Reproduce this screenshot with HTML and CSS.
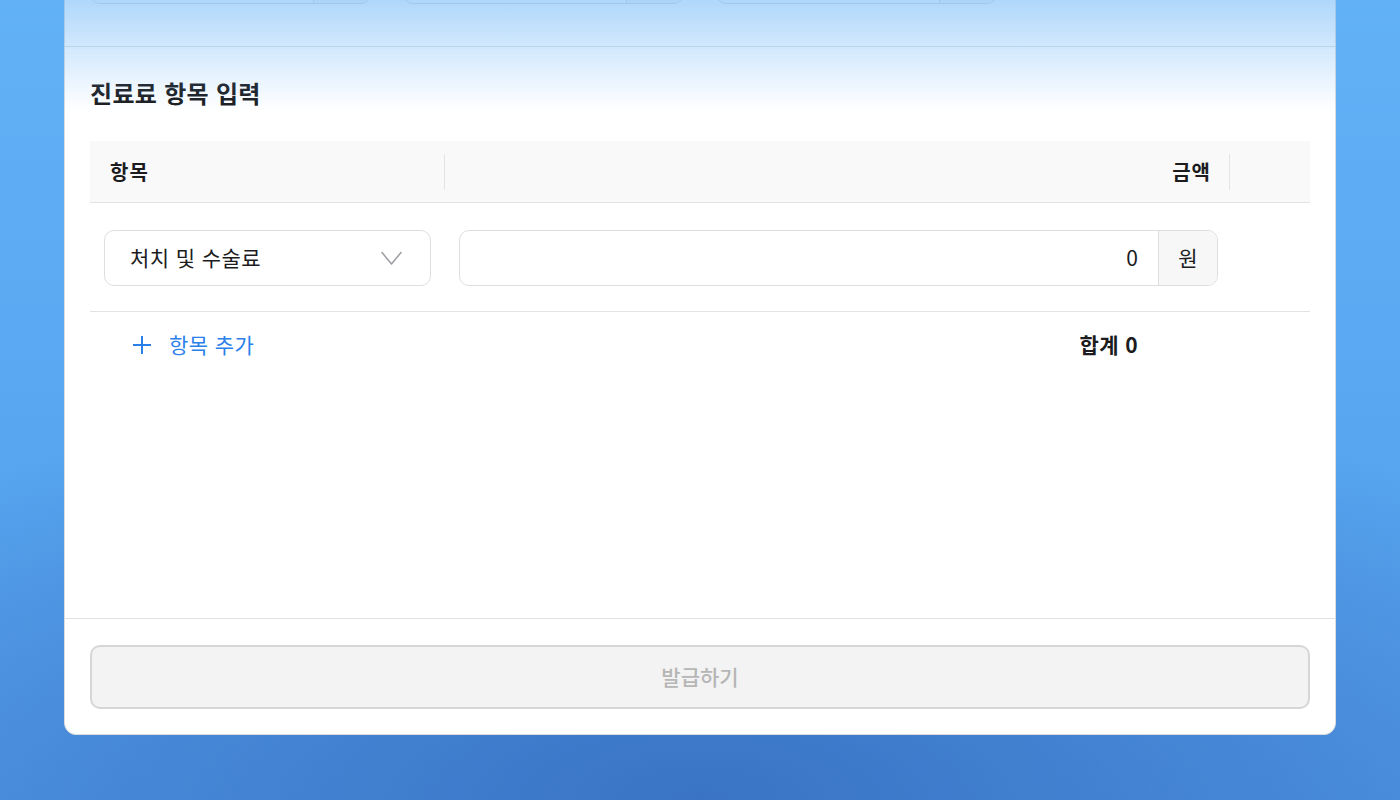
FILE: index.html
```html
<!DOCTYPE html>
<html lang="ko">
<head>
    <meta charset="UTF-8">
    <meta name="viewport" content="width=device-width, initial-scale=1.0">
    <title>진료비 영수증 발급</title>
    <link rel="stylesheet" href="styles.css">
</head>
<body>
    <div class="top-fade"></div>

    <div class="sheet">
        <div class="sheet-top">
            <div class="field-grid">
                <div class="input-group"><div class="input-value"></div><div class="input-suffix"></div></div>
                <div class="input-group"><div class="input-value"></div><div class="input-suffix"></div></div>
                <div class="input-group"><div class="input-value"></div><div class="input-suffix"></div></div>
            </div>
        </div>

        <div class="sheet-body">
            <h2 class="section-title">진료료 항목 입력</h2>

            <div class="fee-table">
                <div class="fee-head">
                    <div class="head-cell">항목</div>
                    <div class="head-cell align-right">금액</div>
                    <div class="head-cell last"></div>
                </div>

                <div class="fee-row">
                    <div class="cell">
                        <div class="select">
                            <span>처치 및 수술료</span>
                            <svg class="chevron" width="21" height="15" viewBox="0 0 21 15">
                                <path d="M1 1.5 L10.5 13 L20 1.5" fill="none" stroke="#9c9ca3" stroke-width="1.5" stroke-linecap="round" stroke-linejoin="round"/>
                            </svg>
                        </div>
                    </div>
                    <div class="cell cell-amount">
                        <div class="amount">
                            <div class="amount-value">0</div>
                            <div class="amount-suffix">원</div>
                        </div>
                    </div>
                    <div class="cell"></div>
                </div>

                <div class="fee-foot">
                    <button class="add-item">
                        <svg width="20" height="20" viewBox="0 0 20 20">
                            <path d="M10 1 V19 M1 10 H19" stroke="#2a7fea" stroke-width="2"/>
                        </svg>
                        <span>항목 추가</span>
                    </button>
                    <div class="total">합계 0</div>
                    <div></div>
                </div>
            </div>
        </div>

        <div class="sheet-footer">
            <button class="submit" disabled>발급하기</button>
        </div>
    </div>
</body>
</html>
```

FILE: styles.css
```css
* {
    margin: 0;
    padding: 0;
    box-sizing: border-box;
}

body {
    font-family: "Noto Sans CJK KR", "Noto Sans", sans-serif;
    color: #1c1c1e;
    height: 800px;
    overflow: hidden;
    background:
        radial-gradient(ellipse 75% 55% at 50% 100%, #3a73c4 0%, rgba(58, 115, 196, 0) 100%),
        linear-gradient(180deg, #62b2f7 0%, #58a6f0 55%, #4f98e6 100%);
}

/* blue fade over the top edge of the scrolled sheet */
.top-fade {
    position: fixed;
    top: 0;
    left: 0;
    right: 0;
    height: 110px;
    background: linear-gradient(180deg, rgba(96, 176, 246, 0.5) 0%, rgba(96, 176, 246, 0) 100%);
    pointer-events: none;
    z-index: 5;
}

.sheet {
    width: 1272px;
    height: 812px;
    margin: -77px auto 0;
    background-color: white;
    border: 1px solid #dcdcdc;
    border-radius: 12px;
    display: flex;
    flex-direction: column;
}

.sheet-top {
    padding: 24px 25px 42px;
    border-bottom: 1px solid #e2e2e2;
}

.field-grid {
    display: grid;
    grid-template-columns: repeat(4, 1fr);
    gap: 32px;
}

.input-group {
    display: flex;
    height: 56px;
    border: 1px solid #dedede;
    border-radius: 10px;
    overflow: hidden;
}

.input-value {
    flex: 1;
}

.input-suffix {
    width: 57px;
    background-color: #f7f7f7;
    border-left: 1px solid #dedede;
}

.sheet-body {
    flex: 1;
    padding: 31px 25px 0;
}

.section-title {
    font-size: 24px;
    line-height: 30px;
    font-weight: 700;
    letter-spacing: 0.3px;
    margin-bottom: 33px;
}

.fee-head,
.fee-row,
.fee-foot {
    display: grid;
    grid-template-columns: 355px 1fr 80px;
}

.fee-head {
    height: 62px;
    align-items: center;
    background-color: #f9f9f9;
    border-bottom: 1px solid #e3e3e3;
}

.head-cell {
    height: 36px;
    line-height: 36px;
    padding: 0 19px 0 20px;
    font-size: 20px;
    font-weight: 700;
    letter-spacing: 1px;
    border-right: 1px solid #e3e3e3;
}

.head-cell.align-right {
    padding-right: 18px;
}

.head-cell.last {
    border-right: none;
}

.align-right {
    text-align: right;
}

.fee-row {
    padding: 27px 0 25px;
    border-bottom: 1px solid #e3e3e3;
}

.cell {
    padding: 0 14px;
}

.cell-amount {
    padding: 0 12px 0 14px;
}

.select {
    height: 56px;
    display: flex;
    align-items: center;
    justify-content: space-between;
    padding: 0 28px 3px 25px;
    border: 1px solid #dedede;
    border-radius: 10px;
    font-size: 21px;
    letter-spacing: 0.4px;
}

.select .chevron {
    margin-top: 3px;
}

.amount {
    height: 56px;
    display: flex;
    border: 1px solid #dedede;
    border-radius: 10px;
    overflow: hidden;
    font-size: 21px;
}

.amount-value {
    flex: 1;
    display: flex;
    align-items: center;
    justify-content: flex-end;
    padding: 0 20px 3px 0;
}

.amount-suffix {
    width: 59px;
    display: flex;
    align-items: center;
    justify-content: center;
    padding-bottom: 3px;
    background-color: #f7f7f7;
    border-left: 1px solid #dedede;
}

.fee-foot {
    height: 66px;
    align-items: center;
}

.add-item {
    display: flex;
    align-items: center;
    gap: 17px;
    padding-left: 42px;
    background: none;
    border: none;
    font-family: inherit;
    font-size: 21px;
    letter-spacing: 0.4px;
    color: #2a7fea;
    cursor: pointer;
}

.add-item span {
    margin-top: -2px;
}

.total {
    text-align: right;
    padding: 0 92px 2px 0;
    font-size: 21px;
    font-weight: 700;
    letter-spacing: 0.4px;
}

.sheet-footer {
    padding: 26px 25px 25px;
    border-top: 1px solid #e2e2e2;
}

.submit {
    width: 100%;
    height: 64px;
    padding-bottom: 3px;
    background-color: #f3f3f3;
    border: 2px solid #d6d6d6;
    border-radius: 10px;
    font-family: inherit;
    font-size: 21px;
    font-weight: 500;
    color: #b6b6b6;
}
```
